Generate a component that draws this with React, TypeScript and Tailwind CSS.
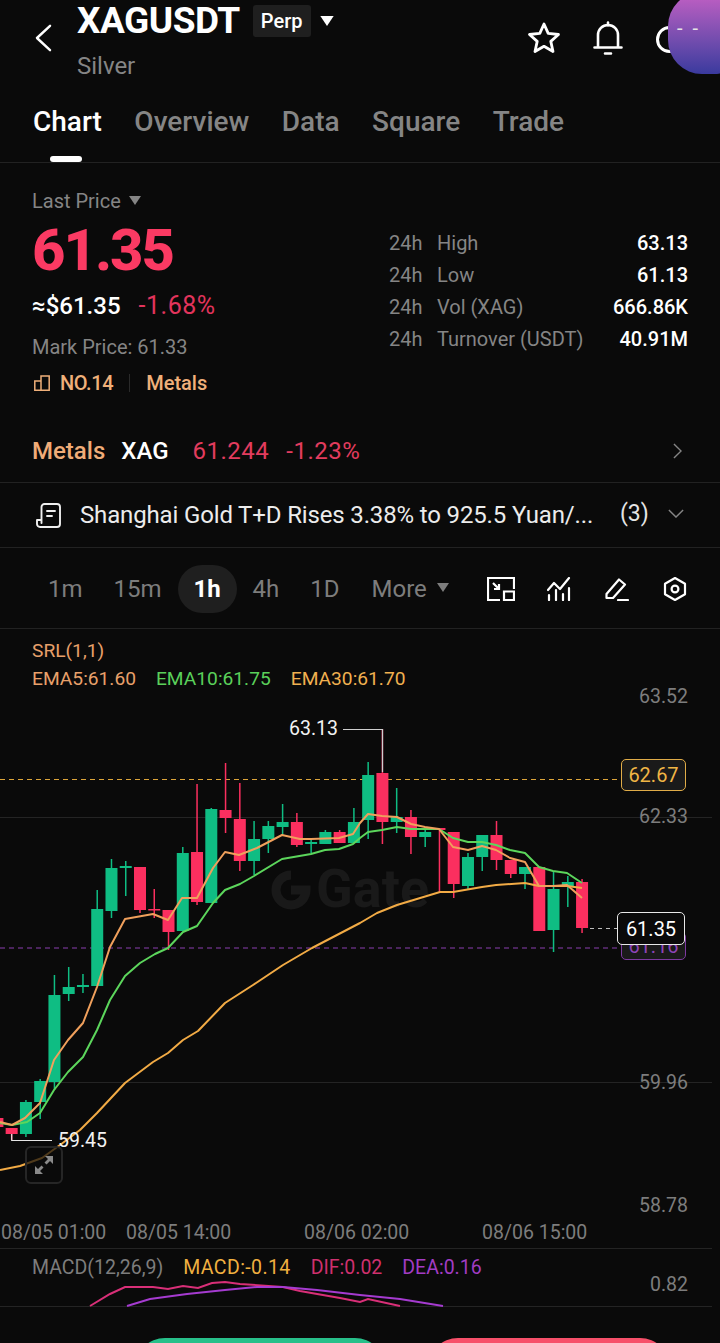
import React from "react";

type C = [number, number, number, number, "g" | "r"];
const candles: C[] = [
  [1118, 1118, 1127, 1130, "r"],
  [1128, 1128, 1134, 1140, "r"],
  [1100, 1102, 1134, 1137, "g"],
  [1079, 1081, 1102, 1119, "g"],
  [975, 995, 1082, 1090, "g"],
  [967, 987, 994, 1001, "g"],
  [974, 985, 987, 993, "g"],
  [890, 909, 986, 986, "g"],
  [859, 868, 911, 918, "g"],
  [861, 866, 868, 896, "g"],
  [867, 867, 910, 913, "r"],
  [889, 909, 910, 918, "r"],
  [910, 910, 932, 950, "r"],
  [847, 853, 931, 931, "g"],
  [784, 852, 902, 905, "r"],
  [808, 809, 903, 903, "g"],
  [763, 810, 818, 833, "r"],
  [783, 819, 861, 871, "r"],
  [821, 839, 861, 875, "g"],
  [821, 826, 839, 853, "g"],
  [804, 822, 827, 835, "g"],
  [813, 822, 845, 847, "r"],
  [839, 842, 844, 853, "g"],
  [830, 832, 844, 844, "g"],
  [830, 832, 843, 843, "r"],
  [808, 822, 843, 843, "g"],
  [762, 775, 820, 839, "g"],
  [729, 773, 822, 844, "r"],
  [788, 817, 822, 833, "g"],
  [810, 817, 837, 854, "r"],
  [827, 832, 837, 847, "g"],
  [828, 828, 830, 892, "r"],
  [832, 832, 884, 898, "r"],
  [853, 857, 886, 889, "g"],
  [835, 835, 857, 871, "g"],
  [821, 835, 860, 870, "r"],
  [860, 860, 874, 878, "r"],
  [867, 867, 874, 889, "g"],
  [867, 867, 931, 931, "r"],
  [872, 889, 930, 952, "g"],
  [876, 882, 886, 907, "g"],
  [879, 882, 928, 933, "r"],
];

const ema5 = "0,1122 12,1125 25,1118 40,1103 54,1060 68,1040 83,1023 97,987 110,947 125,919 153,914 168,920 182,898 197,898 213,868 225,852 239,855 257,848 282,835 300,839 311,839 339,838 353,834 360,823 368,814 382,816 397,817 411,824 425,827 439,829 453,847 468,850 482,846 496,850 510,858 525,862 539,886 553,886 567,885 582,898";
const ema10 = "0,1123 12,1125 27,1122 40,1113 54,1090 68,1072 83,1057 97,1030 110,1000 125,976 140,963 155,954 168,948 183,932 197,926 213,903 225,890 240,884 254,876 282,859 311,854 325,850 339,849 353,844 360,838 368,832 382,830 397,827 411,829 439,829 453,838 468,842 482,842 496,845 510,850 525,853 539,867 553,871 567,873 582,883";
const ema30 = "0,1170 20,1166 42,1158 60,1145 80,1130 97,1113 125,1083 153,1062 168,1053 183,1040 198,1031 225,1003 253,985 283,965 312,948 360,923 377,913 397,905 440,892 453,892 482,887 496,885 525,883 539,886 567,886 582,888";
const dif = "90,1306 110,1294 125,1287 153,1287 168,1289 183,1286 198,1288 212,1283 225,1282 240,1284 283,1287 300,1291 340,1298 360,1302 368,1299 400,1306";
const dea = "127,1306 150,1299 187,1294 225,1290 257,1287 283,1287 317,1290 360,1295 400,1299 443,1306";

const tabs = ["Chart", "Overview", "Data", "Square", "Trade"];
const stats = [
  ["High", "63.13"],
  ["Low", "61.13"],
  ["Vol (XAG)", "666.86K"],
  ["Turnover (USDT)", "40.91M"],
];

function Tri({ cls }: { cls: string }) {
  return (
    <svg viewBox="0 0 12 9" className={cls}>
      <path d="M0 0h12L6 9z" fill="currentColor" />
    </svg>
  );
}

function Chart() {
  return (
    <svg viewBox="0 629 720 709" className="absolute left-0 top-0 h-[709px] w-[720px]">
      <g stroke="#242424" strokeWidth="1">
        <line x1="0" x2="712" y1="817.5" y2="817.5" />
        <line x1="0" x2="712" y1="1082.5" y2="1082.5" />
        <line x1="0" x2="712" y1="1248.5" y2="1248.5" />
        <line x1="0" x2="712" y1="1306.5" y2="1306.5" />
      </g>
      <line x1="0" x2="621" y1="779.5" y2="779.5" stroke="#dda53a" strokeDasharray="5 4" />
      <line x1="0" x2="621" y1="948" y2="948" stroke="#8a3fb0" strokeDasharray="5 4" />
      <line x1="590" x2="617" y1="928.5" y2="928.5" stroke="#bdbdbd" strokeDasharray="4 4" />
      {candles.map((c, i) => {
        const x = -2.6 + 14.26 * i;
        const col = c[4] === "g" ? "#0fbd83" : "#fb2f5f";
        return (
          <g key={i} fill={col}>
            <rect x={x - 0.75} y={c[0]} width="1.5" height={c[3] - c[0]} />
            <rect x={x - 6} y={c[1]} width="12" height={Math.max(c[2] - c[1], 1.5)} />
          </g>
        );
      })}
      <polyline points={ema30} fill="none" stroke="#f2ab45" strokeWidth="2" strokeLinejoin="round" />
      <polyline points={ema10} fill="none" stroke="#5cd65c" strokeWidth="2" strokeLinejoin="round" />
      <polyline points={ema5} fill="none" stroke="#f0a05c" strokeWidth="2" strokeLinejoin="round" />
      <polyline points={dif} fill="none" stroke="#d92f78" strokeWidth="2" />
      <polyline points={dea} fill="none" stroke="#a53bd0" strokeWidth="2" />
      <path d="M343 729.5h39.5V772" fill="none" stroke="#cfcfcf" strokeWidth="1.2" />
      <path d="M11.7 1134v6.5H52" fill="none" stroke="#e6e6e6" strokeWidth="1.2" />
      <g transform="translate(272 870)" fill="none" stroke="#191919" strokeWidth="9">
        <path d="M19 5a15 15 0 1 0 15 15H19" />
      </g>
    </svg>
  );
}

export default function App() {
  return (
    <div
      className="relative h-[1343px] w-[720px] overflow-hidden bg-[#0a0a0a] text-white"
      style={{ fontFamily: "Roboto, 'Noto Sans', sans-serif" }}
    >
      {/* header */}
      <div className="flex h-[98px] items-start">
        <svg viewBox="0 0 18 30" className="ml-[35px] mt-[24px] h-[28px] w-[17px]" fill="none" stroke="#fff" strokeWidth="2.6" strokeLinecap="round" strokeLinejoin="round">
          <path d="M16 2 2 15l14 13" />
        </svg>
        <div className="ml-[25px]">
          <div className="flex items-center">
            <span className="text-[37px] font-bold leading-[42px] tracking-[-0.5px]">XAGUSDT</span>
            <span className="ml-[13px] flex h-[32px] w-[58px] items-center justify-center rounded-[3px] bg-[#1f1f1f] text-[20px] font-medium">Perp</span>
            <Tri cls="ml-[9px] h-[10px] w-[14px] text-white" />
          </div>
          <div className="mt-[10px] text-[24px] leading-[28px] text-[#858585]">Silver</div>
        </div>
        <div className="ml-auto flex items-start">
          <svg viewBox="0 0 34 34" className="mt-[21px] h-[34px] w-[34px]" fill="none" stroke="#fff" strokeWidth="2.8" strokeLinejoin="round">
            <path d="M17 3l4.2 9.4 10.3 1.1-7.7 6.9 2.2 10.1-9-5.2-9 5.2 2.2-10.1-7.7-6.9 10.3-1.1z" />
          </svg>
          <svg viewBox="0 0 30 34" className="ml-[32px] mt-[21px] h-[34px] w-[30px]" fill="none" stroke="#fff" strokeWidth="2.6" strokeLinecap="round" strokeLinejoin="round">
            <path d="M15 1.5v3M5 26V14a10 10 0 0 1 20 0v12M1.5 26.5h27M12 32.5h6" />
          </svg>
          <div className="ml-[33px] mr-[37px] mt-[26px] h-[27px] w-[27px] rounded-full border-[3px] border-white" />
        </div>
      </div>

      {/* floating bubble */}
      <div className="absolute left-[668px] top-[-8px] flex h-[82px] w-[80px] items-start rounded-[34px] bg-gradient-to-b from-[#c45fc4] to-[#3a3a9e] pl-[9px] pt-[22px] text-[20px] leading-[28px] text-[#e5e5e5]">
        <span className="tracking-[10px]">--</span>
      </div>

      {/* tabs */}
      <div className="relative flex h-[65px] gap-[32.5px] border-b border-[#222] pl-[33px] text-[28px] font-medium leading-[48px] text-[#858585]">
        {tabs.map((t, i) => (
          <span key={t} className={i === 0 ? "text-white" : ""}>{t}</span>
        ))}
        <div className="absolute left-[50px] top-[58px] h-[6px] w-[32px] rounded-full bg-white" />
      </div>

      {/* summary */}
      <div className="relative h-[320px] border-b border-[#222]">
        <div className="absolute left-0 top-0 w-[360px] pl-[32px] pt-[24px]">
          <div className="flex h-[28px] items-center text-[20px] text-[#858585]">
            Last Price
            <Tri cls="ml-[8px] mb-[2px] h-[9px] w-[12px] text-[#858585]" />
          </div>
          <div className="mt-[3px] text-[58px] font-extrabold leading-[64px] tracking-[-2px] text-[#fb3a63]">61.35</div>
          <div className="mt-[8px] flex items-center text-[24px] leading-[32px]">
            <span className="font-medium">≈$61.35</span>
            <span className="ml-[18px] text-[25px] tracking-[0.5px] text-[#e2345c]">-1.68%</span>
          </div>
          <div className="mt-[9px] text-[20px] leading-[32px] text-[#858585]">Mark Price: 61.33</div>
          <div className="mt-[4px] flex h-[32px] items-center text-[20px] font-medium text-[#f0b07a]">
            <svg viewBox="0 0 16 16" className="ml-[2px] h-[16px] w-[16px]" fill="none" stroke="#f0b07a" strokeWidth="1.5">
              <path d="M.8 6h6.2v9.2H.8zM7 15.2V1h8.2v14.2H7z" />
            </svg>
            <span className="ml-[10px] tracking-[-0.4px]">NO.14</span>
            <span className="ml-[16px] h-[18px] w-px bg-[#2a2a2a]" />
            <span className="ml-[16px]">Metals</span>
          </div>
        </div>
        <div className="absolute left-[389px] top-[64px] w-[299px] text-[20px] leading-[32px]">
          {stats.map(([k, v]) => (
            <div key={k} className="flex">
              <span className="w-[48px] text-[#858585]">24h</span>
              <span className="text-[#858585]">{k}</span>
              <span className="ml-auto font-medium">{v}</span>
            </div>
          ))}
        </div>
        <div className="absolute left-0 top-[269px] flex h-[38px] w-full items-center pl-[32px] text-[24px]">
          <span className="font-medium text-[#f0ac78]">Metals</span>
          <span className="ml-[16px] font-medium">XAG</span>
          <span className="ml-[24px] tracking-[0.5px] text-[#e23c5e]">61.244</span>
          <span className="ml-[17px] tracking-[0.5px] text-[#e23c5e]">-1.23%</span>
          <svg viewBox="0 0 10 18" className="absolute left-[673px] top-[11px] h-[16px] w-[9px]" fill="none" stroke="#858585" strokeWidth="1.6">
            <path d="M1 1l8 8-8 8" />
          </svg>
        </div>
      </div>

      {/* news */}
      <div className="flex h-[65px] items-center border-b border-[#222] text-[24px]">
        <svg viewBox="0 0 25 25" className="ml-[36px] h-[25px] w-[25px]" fill="none" stroke="#f0f0f0" strokeWidth="1.9" strokeLinecap="round" strokeLinejoin="round">
          <path d="M5.5 20V4a3 3 0 0 1 3-3h12.5a3 3 0 0 1 3 3v17a3 3 0 0 1-3 3H4a3 3 0 0 1-3-3v-4h4.5M11 8h8M11 13h5" />
        </svg>
        <span className="ml-[19px] w-[514px] whitespace-nowrap tracking-[-0.15px] text-[#ececec]">Shanghai Gold T+D Rises 3.38% to 925.5 Yuan/...</span>
        <span className="ml-[26px] mb-[2px] text-[23px] text-[#e5e5e5]">(3)</span>
        <svg viewBox="0 0 18 10" className="ml-[19px] mb-[4px] h-[9px] w-[16px]" fill="none" stroke="#858585" strokeWidth="1.6">
          <path d="M1 1l8 8 8-8" />
        </svg>
      </div>

      {/* intervals */}
      <div className="relative flex h-[81px] items-center border-b border-[#222] pt-[2px] text-[24px] text-[#7d7d7d]">
        <span className="ml-[48px]">1m</span>
        <span className="ml-[31px]">15m</span>
        <span className="ml-[16px] flex h-[48px] w-[59px] items-center justify-center rounded-full bg-[#1f1f1f] font-bold text-white">1h</span>
        <span className="ml-[16px]">4h</span>
        <span className="ml-[31px]">1D</span>
        <span className="ml-[32px]">More</span>
        <Tri cls="ml-[10px] mb-[3px] h-[9px] w-[12px] text-[#7d7d7d]" />
        <svg viewBox="0 0 28 24" className="ml-[38px] h-[24px] w-[28px]" fill="none" stroke="#fff" strokeWidth="2.2">
          <path d="M13 23H1V1h26v11M6 6l6 6M12 7v5H7" />
          <path d="M17 14.5h10v8.5H17z" />
        </svg>
        <svg viewBox="0 0 24 24" className="ml-[32px] h-[24px] w-[24px]" fill="none" stroke="#fff" strokeWidth="2.2" strokeLinecap="round" strokeLinejoin="round">
          <path d="M1 13 7 6l6 6 9-11M2 18v5M9 13v10M16 17v6M22 11v12" />
        </svg>
        <svg viewBox="0 0 24 24" className="ml-[34px] h-[24px] w-[24px]" fill="none" stroke="#fff" strokeWidth="2.2" strokeLinecap="round" strokeLinejoin="round">
          <path d="M1.5 17 14 2.5l6 5L8 21H1.5zM13 23h10" />
        </svg>
        <svg viewBox="0 0 24 24" className="ml-[34px] h-[24px] w-[24px]" fill="none" stroke="#fff" strokeWidth="2.2" strokeLinejoin="round">
          <path d="M12 1l10 5.8v10.4L12 23 2 17.2V6.8z" />
          <circle cx="12" cy="12" r="3.4" />
        </svg>
      </div>

      {/* chart */}
      <div className="relative h-[709px]">
        <span className="absolute left-[316px] top-[233px] text-[54px] font-bold leading-[54px] text-[#191919]">Gate</span>
        <Chart />
        <div className="relative pl-[32px] pt-[8px] text-[19.2px] leading-[28px]">
          <div className="text-[#e8a06a]">SRL(1,1)</div>
          <div className="flex gap-[20px]">
            <span className="text-[#e8a06a]">EMA5:61.60</span>
            <span className="text-[#5ad05a]">EMA10:61.75</span>
            <span className="text-[#f0b050]">EMA30:61.70</span>
          </div>
        </div>

        {[["63.52", 68], ["62.33", 188], ["59.96", 454], ["58.78", 577], ["0.82", 656]].map(([t, y]) => (
          <span key={t} className="absolute right-[32px] text-[19.5px] leading-[24px] text-[#7d7d7d]" style={{ top: Number(y) - 12 }}>{t}</span>
        ))}
        {[["08/05 01:00", 1], ["08/05 14:00", 126], ["08/06 02:00", 304], ["08/06 15:00", 482]].map(([t, x]) => (
          <span key={t} className="absolute top-[592px] text-[19.5px] leading-[24px] text-[#7d7d7d]" style={{ left: Number(x) }}>{t}</span>
        ))}
        <span className="absolute left-[289px] top-[88px] text-[19.5px] leading-[24px] text-[#f2f2f2]">63.13</span>
        <span className="absolute left-[58px] top-[500px] text-[19.5px] leading-[24px] text-[#f2f2f2]">59.45</span>

        <div className="absolute left-[621px] top-[130px] flex h-[32px] w-[65px] items-center justify-center rounded-[5px] border border-[#e0ac48] bg-[#1a1a1a] text-[20px] text-[#f0b545]">62.67</div>
        <div className="absolute left-[621px] top-[303px] flex h-[28px] w-[65px] items-center justify-center rounded-[5px] border border-[#7d3aa0] bg-[#1a1a1a] text-[20px] text-[#8e44b8]">61.16</div>
        <div className="absolute left-[617px] top-[283px] flex h-[33px] w-[68px] items-center justify-center rounded-[5px] border border-[#e8e8e8] bg-[#0a0a0a] text-[20px] text-white">61.35</div>

        <div className="absolute left-[25px] top-[517px] flex h-[38px] w-[38px] items-center justify-center rounded-[6px] border-2 border-[#262626] bg-[#0a0a0a]/70">
          <svg viewBox="0 0 20 20" className="h-[20px] w-[20px]" fill="#8a8a8a">
            <path d="M19 1v8l-3-3-3.5 3.5-2-2L14 4l-3-3zM1 19v-8l3 3 3.5-3.5 2 2L6 16l3 3z" />
          </svg>
        </div>

        <div className="absolute left-[32px] top-[625px] flex gap-[20px] text-[19.5px] leading-[28px]">
          <span className="text-[#7d7d7d]">MACD(12,26,9)</span>
          <span className="tracking-[0.4px] text-[#f0b040]">MACD:-0.14</span>
          <span className="text-[#d0306e]">DIF:0.02</span>
          <span className="text-[#a23cc4]">DEA:0.16</span>
        </div>
      </div>

      {/* bottom buttons */}
      <div className="flex h-[40px] pl-[135px]">
        <div className="h-[40px] w-[250px] rounded-t-[30px] bg-[#27c08a]" />
        <div className="ml-[43px] h-[40px] w-[242px] rounded-t-[30px] bg-[#f7506a]" />
      </div>
    </div>
  );
}
